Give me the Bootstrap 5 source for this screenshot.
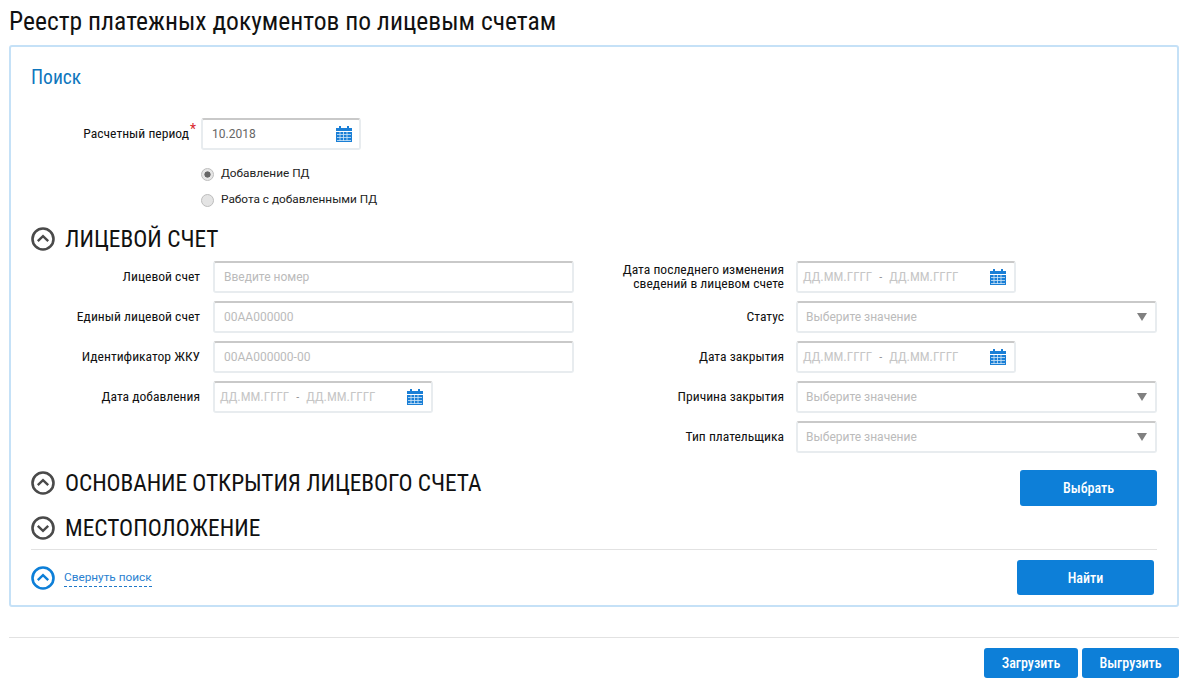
<!DOCTYPE html>
<html lang="ru"><head><meta charset="utf-8"><title>Реестр</title>
<link rel="stylesheet" href="https://cdn.jsdelivr.net/npm/bootstrap@5.3.0/dist/css/bootstrap.min.css">
<style>
body{background:#fff;color:#000;font-family:"Roboto",sans-serif;font-size:12px;margin:0}
.page-wrap{padding:0 19px 0 9px;height:690px;overflow:hidden}
.cond{font-family:"Roboto","Roboto Condensed",sans-serif;font-stretch:condensed}
.page-title{font-size:25.55px;font-weight:400;line-height:28px;margin:0;padding-top:7px;height:45px;color:#111}
.search-panel{border:2px solid #c5e1f7;border-radius:3px;height:562px;padding:0 20px}
.search-head{font-size:19.5px;font-weight:400;color:#0e76bd;line-height:22px;padding-top:20px;height:71px;margin:0}
.lbl{font-size:13.6px;line-height:14px;color:#111;text-align:right;padding-bottom:2px}
.ctrl{height:32px;border:2px solid #e8ecef;border-top-color:#c9c9c9;border-radius:3px;padding:0 9px;display:flex;align-items:center;font-size:12px;color:#bbb;background:#fff}
.form-line{display:flex;align-items:center;height:32px;margin-bottom:8px}
.period-line{margin-bottom:11px}
.period-lbl{width:165px;flex:none}
.req{color:#d9262c;font-size:14px;position:relative;top:-4px;margin-left:1px}
.period-ctrl{width:160px;color:#666;margin-left:5px;padding-right:7px}
.cal{margin-left:auto;flex:none}
.radio-row{display:flex;align-items:center;height:26px;margin-left:170px;gap:7px;color:#222;font-size:11.8px}
.radio-dot{width:13px;height:13px;border-radius:50%;border:1px solid #bdbdbd;background:#e4e4e4;display:block;flex:none}
.radio-dot.on{background:radial-gradient(circle,#666 0 2.8px,#e6e6e6 3.4px)}
.section-head{display:flex;align-items:center;gap:10px;font-size:23.4px;line-height:28px;color:#111}
.sec-first{height:48px;padding-top:3px}
.sec-second{height:44px;letter-spacing:-.08px}
.sec-third{height:43px}
.ico-dark{color:#4a4a4a;flex:none}
.ico-blue{color:#0d7fd8;flex:none}
.section-row{display:flex;justify-content:space-between;align-items:flex-start;height:45px}
.form-columns{display:flex;height:200px}
.left-col{width:543px;flex:none}
.right-col{width:583px;flex:none}
.l-lbl{width:169px;flex:none}
.l-ctrl{width:361px;margin-left:13px;flex:none}
.r-lbl{width:210px;flex:none}
.r-ctrl{width:361px;margin-left:12px;flex:none;padding-left:8px}
.d-ctrl{width:220px;padding:0 8px 0 5px;color:#c6c6c6;font-size:13px;font-family:"Roboto",sans-serif;font-stretch:condensed}
.dash{margin:0 7px;color:#999;font-size:12px}
.tri{width:0;height:0;border-left:5.5px solid transparent;border-right:5.5px solid transparent;border-top:8px solid #808080;margin-left:auto;margin-right:-1px}
.btn-blue{background:#0d7fd8;border:0;border-radius:3px;color:#fff;font-size:14px;font-weight:500;padding:0;line-height:16px}
.btn-blue:hover{background:#0d7fd8;color:#fff}
.btn-select{width:137px;height:36px;margin-top:9px}
.btn-find{width:137px;height:35px;margin-right:3px}
.btn-load{width:94px;height:30px}
.btn-unload{width:97px;height:30px}
.panel-rule{border-top:1px solid #e2e2e2;margin:0;opacity:1}
.panel-foot{display:flex;justify-content:space-between;align-items:center;padding-top:10px}
.collapse-link{display:flex;align-items:center;gap:10px}
.toggle{font-size:11.8px;color:#2a7fd0;border-bottom:1px dashed #1f78c8;line-height:16px;padding-bottom:1px;text-decoration:none;margin-left:-1px}
.page-rule{border-top:1px solid #e2e2e2;margin:30px 0 10px;opacity:1}
</style></head><body>
<svg width="0" height="0" class="d-block position-absolute"><defs>
<symbol id="cal" viewBox="0 0 16 16"><rect x="0" y="2" width="16" height="14" fill="#1a7fd6"/><rect x="3" y="0" width="2" height="3" fill="#1a7fd6"/><rect x="11" y="0" width="2" height="3" fill="#1a7fd6"/><path d="M0 5.5h16" stroke="#fff" stroke-width="1"/><path d="M1 8.5h14M1 11.5h14M1 14.5h14M4 6v9M7.5 6v9M11 6v9" stroke="#cfe6f8" stroke-width=".8"/></symbol>
<symbol id="up" viewBox="0 0 24 24"><circle cx="12" cy="12" r="10.5" fill="none" stroke="currentColor" stroke-width="2.6"/><path d="M6.8 14.2 12 9.2l5.2 5" fill="none" stroke="currentColor" stroke-width="2.4"/></symbol>
<symbol id="down" viewBox="0 0 24 24"><circle cx="12" cy="12" r="10.5" fill="none" stroke="currentColor" stroke-width="2.6"/><path d="M6.8 9.8 12 14.8l5.2-5" fill="none" stroke="currentColor" stroke-width="2.4"/></symbol>
</defs></svg>
<div class="page-wrap">
<h1 class="page-title cond">Реестр платежных документов по лицевым счетам</h1>
<div class="search-panel">
<h2 class="search-head cond">Поиск</h2>
<div class="form-line period-line"><div class="lbl cond period-lbl">Расчетный период<span class="req">*</span></div><div class="ctrl period-ctrl">10.2018<svg class="cal" width="16" height="16"><use href="#cal"/></svg></div></div>
<div class="radio-row"><span class="radio-dot on"></span><span>Добавление ПД</span></div>
<div class="radio-row"><span class="radio-dot"></span><span>Работа с добавленными ПД</span></div>
<div class="section-head sec-first cond"><svg class="ico-dark" width="24" height="24"><use href="#up"/></svg><span>ЛИЦЕВОЙ СЧЕТ</span></div>
<div class="form-columns">
 <div class="left-col">
  <div class="form-line"><div class="lbl cond l-lbl">Лицевой счет</div><div class="ctrl l-ctrl">Введите номер</div></div>
  <div class="form-line"><div class="lbl cond l-lbl">Единый лицевой счет</div><div class="ctrl l-ctrl">00АА000000</div></div>
  <div class="form-line"><div class="lbl cond l-lbl">Идентификатор ЖКУ</div><div class="ctrl l-ctrl">00АА000000-00</div></div>
  <div class="form-line"><div class="lbl cond l-lbl">Дата добавления</div><div class="ctrl l-ctrl d-ctrl"><span>ДД.ММ.ГГГГ</span><span class="dash">-</span><span>ДД.ММ.ГГГГ</span><svg class="cal" width="16" height="16"><use href="#cal"/></svg></div></div>
 </div>
 <div class="right-col">
  <div class="form-line"><div class="lbl cond r-lbl">Дата последнего изменения сведений в лицевом счете</div><div class="ctrl r-ctrl d-ctrl"><span>ДД.ММ.ГГГГ</span><span class="dash">-</span><span>ДД.ММ.ГГГГ</span><svg class="cal" width="16" height="16"><use href="#cal"/></svg></div></div>
  <div class="form-line"><div class="lbl cond r-lbl">Статус</div><div class="ctrl r-ctrl">Выберите значение<span class="tri"></span></div></div>
  <div class="form-line"><div class="lbl cond r-lbl">Дата закрытия</div><div class="ctrl r-ctrl d-ctrl"><span>ДД.ММ.ГГГГ</span><span class="dash">-</span><span>ДД.ММ.ГГГГ</span><svg class="cal" width="16" height="16"><use href="#cal"/></svg></div></div>
  <div class="form-line"><div class="lbl cond r-lbl">Причина закрытия</div><div class="ctrl r-ctrl">Выберите значение<span class="tri"></span></div></div>
  <div class="form-line"><div class="lbl cond r-lbl">Тип плательщика</div><div class="ctrl r-ctrl">Выберите значение<span class="tri"></span></div></div>
 </div>
</div>
<div class="section-row"><div class="section-head sec-second cond"><svg class="ico-dark" width="24" height="24"><use href="#up"/></svg><span>ОСНОВАНИЕ ОТКРЫТИЯ ЛИЦЕВОГО СЧЕТА</span></div><button type="button" class="btn btn-blue btn-select cond">Выбрать</button></div>
<div class="section-head sec-third cond"><svg class="ico-dark" width="24" height="24"><use href="#down"/></svg><span>МЕСТОПОЛОЖЕНИЕ</span></div>
<hr class="panel-rule">
<div class="panel-foot"><div class="collapse-link"><svg class="ico-blue" width="24" height="24"><use href="#up"/></svg><a href="#" class="toggle">Свернуть поиск</a></div><button type="button" class="btn btn-blue btn-find cond">Найти</button></div>
</div>
<hr class="page-rule">
<div class="d-flex justify-content-end gap-1"><button type="button" class="btn btn-blue btn-load cond">Загрузить</button><button type="button" class="btn btn-blue btn-unload cond">Выгрузить</button></div>
</div>
</body></html>
